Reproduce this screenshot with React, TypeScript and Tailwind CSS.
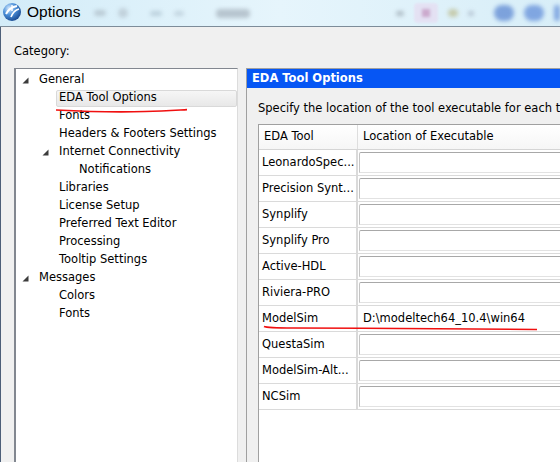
import type { ReactNode } from 'react';

const FONT = { fontFamily: '"DejaVu Sans", Verdana, sans-serif' };
const TITLE_FONT = { fontFamily: '"Liberation Sans", Arial, sans-serif' };

type TreeItem = {
  label: string;
  level: number;
  expanded?: boolean;
  selected?: boolean;
};

const TREE: TreeItem[] = [
  { label: 'General', level: 0, expanded: true },
  { label: 'EDA Tool Options', level: 1, selected: true },
  { label: 'Fonts', level: 1 },
  { label: 'Headers & Footers Settings', level: 1 },
  { label: 'Internet Connectivity', level: 1, expanded: true },
  { label: 'Notifications', level: 2 },
  { label: 'Libraries', level: 1 },
  { label: 'License Setup', level: 1 },
  { label: 'Preferred Text Editor', level: 1 },
  { label: 'Processing', level: 1 },
  { label: 'Tooltip Settings', level: 1 },
  { label: 'Messages', level: 0, expanded: true },
  { label: 'Colors', level: 1 },
  { label: 'Fonts', level: 1 },
];

const TOOLS: { name: string; path?: string }[] = [
  { name: 'LeonardoSpec...' },
  { name: 'Precision Synt...' },
  { name: 'Synplify' },
  { name: 'Synplify Pro' },
  { name: 'Active-HDL' },
  { name: 'Riviera-PRO' },
  { name: 'ModelSim', path: 'D:\\modeltech64_10.4\\win64' },
  { name: 'QuestaSim' },
  { name: 'ModelSim-Alt...' },
  { name: 'NCSim' },
];

function Expander() {
  return (
    <svg width="7" height="7" viewBox="0 0 7 7" className="shrink-0">
      <polygon points="6.5,0.5 6.5,6.5 0.5,6.5" fill="#3c3c3c" />
    </svg>
  );
}

function AppIcon() {
  return (
    <svg width="20" height="20" viewBox="0 0 20 20" className="shrink-0">
      <defs>
        <radialGradient id="ball" cx="0.35" cy="0.3" r="0.8">
          <stop offset="0" stopColor="#d8ecff" />
          <stop offset="0.45" stopColor="#4a8fd8" />
          <stop offset="1" stopColor="#123f86" />
        </radialGradient>
      </defs>
      <circle cx="10" cy="10" r="9" fill="url(#ball)" />
      <path d="M4 12 C7 6, 11 5, 15 4" stroke="#fff" strokeWidth="2" fill="none" />
      <path d="M9 15 C11 10, 13 8, 17 7" stroke="#fff" strokeWidth="1.6" fill="none" />
      <path d="M10 3 L10 9" stroke="#fff" strokeWidth="1.4" />
    </svg>
  );
}

function Blob({ className }: { className: string }) {
  return <div className={`shrink-0 rounded-full blur-[2px] ${className}`} />;
}

function TitleBar() {
  return (
    <div className="relative flex h-[27px] shrink-0 items-center overflow-hidden border-b border-[#7d8c99] bg-gradient-to-r from-[#d3ecf8] via-[#e6f5fc] to-[#d8eef8]">
      <div className="ml-[2px] -mt-[2px] flex items-center gap-[5px]">
        <AppIcon />
        <span className="text-[15.5px] leading-none text-black" style={TITLE_FONT}>
          Options
        </span>
      </div>
      {/* blurred desktop behind the glass frame */}
      <div className="ml-[14px] flex items-center gap-[12px] opacity-50">
        <Blob className="h-[6px] w-[12px] bg-[#9aa6b0]" />
        <Blob className="h-[10px] w-[10px] bg-[#a7b2bc]" />
        <Blob className="ml-[10px] h-[5px] w-[12px] bg-[#9ab0bf]" />
        <Blob className="h-[5px] w-[10px] bg-[#a6b8c5]" />
        <div className="ml-[20px] h-[9px] w-[34px] rounded-sm bg-[#8c97a3] blur-[2px]" />
      </div>
      <div className="ml-auto flex items-center gap-[10px] opacity-60">
        <Blob className="h-[5px] w-[8px] bg-[#8d98a2]" />
        <div className="h-[20px] w-[24px] rounded-sm bg-[#e8d8f0] blur-[1px]">
          <div className="mx-auto mt-[6px] h-[8px] w-[8px] bg-[#c07ab0] blur-[1px]" />
        </div>
        <Blob className="h-[8px] w-[10px] bg-[#b6b27a]" />
        <Blob className="h-[5px] w-[6px] bg-[#9aa5b8]" />
        <Blob className="ml-[10px] h-[16px] w-[20px] bg-[#3f6fc9]" />
        <Blob className="h-[16px] w-[20px] bg-[#4677d2]" />
        <Blob className="h-[16px] w-[6px] bg-[#4677d2]" />
      </div>
    </div>
  );
}

function Tree() {
  return (
    <div className="relative flex w-[224px] shrink-0 flex-col border-t border-l-2 border-r border-t-[#828790] border-l-[#828790] border-r-[#dcdcdc] bg-white pt-[2px]">
      {TREE.map((item, i) => {
        const rowIndent = item.level * 20;
        let content: ReactNode = (
          <span className="whitespace-nowrap text-[11.5px] leading-none text-black">{item.label}</span>
        );
        if (item.selected) {
          content = (
            <div className="-ml-[3px] flex h-[17px] flex-1 items-center rounded-[2px] border border-[#d9d9d9] bg-gradient-to-b from-[#f6f6f6] to-[#e8e8e8] pl-[2px]">
              {content}
            </div>
          );
        }
        return (
          <div key={i} className="flex h-[18px] items-center" style={{ paddingLeft: 6 + rowIndent }}>
            <div className="flex w-[17px] shrink-0 items-center">{item.expanded && <Expander />}</div>
            {content}
          </div>
        );
      })}
      <svg
        className="pointer-events-none absolute left-[39px] top-[39px]"
        width="134"
        height="6"
        viewBox="0 0 134 6"
      >
        <path d="M1 2 C30 3.5, 60 4.5, 90 3.5 C110 3, 124 2, 132 1.6" stroke="#f01010" strokeWidth="1.6" fill="none" />
      </svg>
    </div>
  );
}

function ToolTable() {
  return (
    <div className="relative flex flex-1 flex-col border-t border-l border-[#a0a0a0] bg-white">
      <div className="flex h-[25px] shrink-0 border-b border-[#d5d5d5] bg-gradient-to-b from-white to-[#f6f6f6] text-[11.5px] text-black">
        <div className="flex w-[99px] items-center border-r border-[#dedede] pl-[5px]">EDA Tool</div>
        <div className="flex flex-1 items-center pl-[5px] whitespace-nowrap">Location of Executable</div>
      </div>
      {TOOLS.map((tool) => (
        <div key={tool.name} className="flex h-[26px] shrink-0 border-b border-[#dadada]">
          <div className="flex w-[99px] items-center overflow-hidden border-r-2 border-[#dadada] pl-[3px] text-[11.5px] whitespace-nowrap text-black">
            {tool.name}
          </div>
          <div className="flex flex-1 items-center">
            {tool.path ? (
              <span className="pl-[5px] text-[11.5px] whitespace-nowrap text-black">{tool.path}</span>
            ) : (
              <div className="ml-[1px] h-[21px] flex-1 rounded-tl-[2px] border-t border-l border-b border-t-[#a8a8a8] border-l-[#c4c4c4] border-b-[#e2e2e2] bg-white" />
            )}
          </div>
        </div>
      ))}
      <svg
        className="pointer-events-none absolute left-[4px] top-[200px]"
        width="276"
        height="6"
        viewBox="0 0 276 6"
      >
        <path d="M1 1.5 C3 2.5, 10 3, 30 3 L100 3.2 C160 3.6, 220 4, 274 4.5" stroke="#f01010" strokeWidth="1.6" fill="none" />
      </svg>
    </div>
  );
}

export default function App() {
  return (
    <div className="flex h-[462px] w-[560px] flex-col overflow-hidden bg-[#f0f0f0]" style={FONT}>
      <TitleBar />
      <div className="flex min-h-0 flex-1 flex-col border-l border-[#4d5f78] pl-[13px] pt-[16px]">
        <div className="h-[16px] text-[11.5px] leading-[16px] text-black">Category:</div>
        <div className="mt-[9px] flex min-h-0 flex-1 gap-[8px]">
          <Tree />
          <div className="flex min-w-0 flex-1 flex-col border-t border-l border-[#a0a0a0]">
            <div className="flex h-[19px] shrink-0 items-center bg-[#0656f4] pl-[5px] text-[11.5px] font-bold whitespace-nowrap text-white">
              EDA Tool Options
            </div>
            <div className="flex min-h-0 flex-1 flex-col overflow-hidden pl-[11px] pt-[12px]">
              <div className="h-[16px] text-[11.5px] leading-[16px] whitespace-nowrap text-black">
                Specify the location of the tool executable for each third-party EDA tool:
              </div>
              <div className="mt-[8px] flex min-h-0 flex-1 flex-col">
                <ToolTable />
              </div>
            </div>
          </div>
        </div>
      </div>
    </div>
  );
}
